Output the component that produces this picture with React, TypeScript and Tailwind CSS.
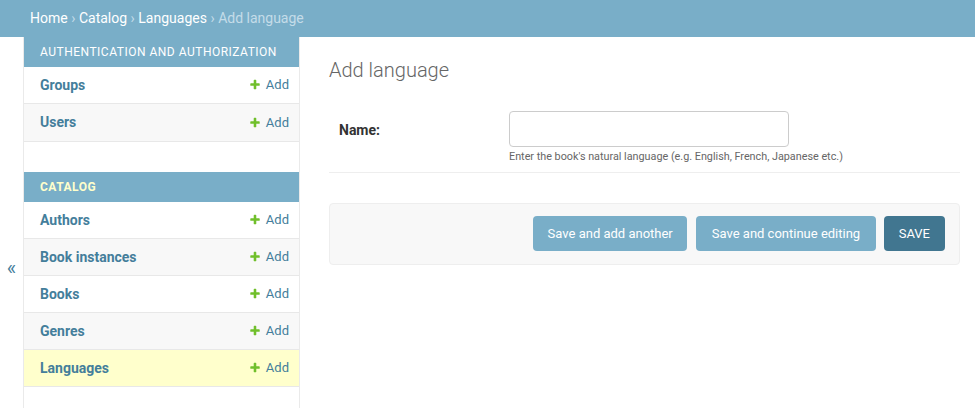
import React from 'react';

const groups = [
  {
    caption: 'Authentication and Authorization',
    current: false,
    rows: ['Groups', 'Users'],
  },
  {
    caption: 'Catalog',
    current: true,
    rows: ['Authors', 'Book instances', 'Books', 'Genres', 'Languages'],
  },
];

function AddLink() {
  return (
    <a className="flex items-center gap-[5px] text-[13px] text-[#447e9b]">
      <svg width="12" height="12" viewBox="0 0 1792 1792">
        <path
          fill="#70bf2b"
          d="M1600 736v192q0 40-28 68t-68 28h-416v416q0 40-28 68t-68 28h-192q-40 0-68-28t-28-68v-416h-416q-40 0-68-28t-28-68v-192q0-40 28-68t68-28h416v-416q0-40 28-68t68-28h192q40 0 68 28t28 68v416h416q40 0 68 28t28 68z"
        />
      </svg>
      Add
    </a>
  );
}

export default function App() {
  return (
    <div className="flex min-h-screen flex-col bg-white font-['Roboto',sans-serif] text-[14px] text-[#333]">
      <div className="flex h-[37px] items-center bg-[#79aec8] px-[30px] text-[14px] text-white">
        <a className="text-white">Home</a>
        <span className="px-[3.5px] text-[#c4dce8]">›</span>
        <a className="text-white">Catalog</a>
        <span className="px-[3.5px] text-[#c4dce8]">›</span>
        <a className="text-white">Languages</a>
        <span className="px-[3.5px] text-[#c4dce8]">›</span>
        <span className="text-[#c4dce8]">Add language</span>
      </div>

      <div className="flex flex-1">
        <div className="w-[24px] shrink-0 border-r border-[#eaeaea] pt-[221px] text-center text-[20px] leading-none text-[#447e9b]">
          «
        </div>

        <nav className="w-[276px] shrink-0 border-r border-[#eaeaea]">
          {groups.map((g, gi) => (
            <div key={gi} className={gi === 0 ? 'mb-[30px] border-b border-[#e8e8e8]' : ''}>
              <div
                className={`flex h-[30px] items-center whitespace-nowrap bg-[#79aec8] px-[16px] text-[12px] uppercase tracking-[0.5px] ${
                  g.current ? 'font-bold text-[#ffffcc]' : 'text-white'
                }`}
              >
                {g.caption}
              </div>
              {g.rows.map((r, ri) => (
                <div
                  key={r}
                  className={`flex h-[37px] items-center justify-between pl-[16px] pr-[10px] ${
                    ri < g.rows.length - 1 || gi === 1 ? 'border-b border-[#e8e8e8]' : ''
                  } ${r === 'Languages' ? 'bg-[#ffffcc]' : ri % 2 === 1 ? 'bg-[#f8f8f8]' : 'bg-white'}`}
                >
                  <a className="text-[14px] font-bold text-[#447e9b]">{r}</a>
                  <AddLink />
                </div>
              ))}
            </div>
          ))}
        </nav>

        <div className="flex-1 pl-[29px] pr-[15px] pt-[18px]">
          <h1 className="mb-[26px] text-[20px] font-light text-[#666]">Add language</h1>

          <div className="flex border-b border-[#eee] pb-[7px] pl-[10px]">
            <label className="w-[170px] pt-[9px] text-[14px] font-bold text-[#333]">Name:</label>
            <div>
              <input
                type="text"
                className="h-[36px] w-[280px] rounded-[4px] border border-[#ccc] bg-white px-[6px] outline-none"
              />
              <div className="pt-[2px] text-[10.8px] text-[#666]">
                Enter the book's natural language (e.g. English, French, Japanese etc.)
              </div>
            </div>
          </div>

          <div className="mt-[30px] flex justify-end rounded-[4px] border border-[#eee] bg-[#f8f8f8] px-[14px] pb-[13px] pt-[12px]">
            <button className="h-[35px] rounded-[4px] bg-[#79aec8] px-[14.5px] text-[13px] text-white">
              Save and add another
            </button>
            <button className="ml-[9px] h-[35px] rounded-[4px] bg-[#79aec8] px-[15.5px] text-[13px] text-white">
              Save and continue editing
            </button>
            <button className="ml-[8px] h-[35px] rounded-[4px] bg-[#417690] px-[15px] text-[13px] text-white">
              SAVE
            </button>
          </div>
        </div>
      </div>
    </div>
  );
}
